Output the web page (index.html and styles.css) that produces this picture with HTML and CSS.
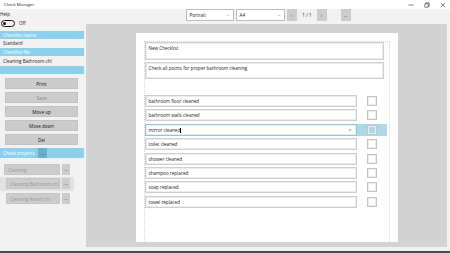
FILE: index.html
```html
<!DOCTYPE html>
<html lang="en">
<head>
    <meta charset="UTF-8">
    <meta name="viewport" content="width=device-width, initial-scale=1.0">
    <title>Check Manager</title>
    <link rel="stylesheet" href="styles.css">
</head>
<body>
    <div class="titlebar">
        <span class="app-title">Check Manager</span>
        <div class="win-controls">
            <svg width="6" height="6" viewBox="0 0 6 6"><path d="M0.5 3h5" stroke="#333" stroke-width="0.6"/></svg>
            <svg width="6" height="6" viewBox="0 0 6 6"><path d="M0.8 1.8h3.4v3.4h-3.4z M1.8 1.8v-1h3.4v3.4h-1" fill="none" stroke="#333" stroke-width="0.6"/></svg>
            <svg width="6" height="6" viewBox="0 0 6 6"><path d="M0.8 0.8l4.4 4.4 M5.2 0.8l-4.4 4.4" stroke="#333" stroke-width="0.6"/></svg>
        </div>
    </div>

    <div class="app">
        <!-- left side panel -->
        <aside class="side">
            <div class="help">Help</div>
            <div class="toggle-row">
                <span class="toggle"><span class="knob"></span></span>
                <span>Off</span>
            </div>
            <div class="bar">Checklist layout</div>
            <div class="side-text">Standard</div>
            <div class="bar">Checklist file</div>
            <div class="side-text tall">Cleaning Bathroom.chl</div>
            <div class="bar"></div>

            <div class="buttons">
                <button class="btn">Print</button>
                <button class="btn disabled">Save</button>
                <button class="btn">Move up</button>
                <button class="btn">Move down</button>
                <button class="btn">Del</button>
            </div>

            <div class="bar projects">
                <span>Check projects</span>
                <span class="bar-btn">...</span>
            </div>

            <div class="project-list">
                <div class="project">
                    <span class="project-name">Cleaning</span>
                    <span class="dots-btn">...</span>
                </div>
                <div class="project selected">
                    <span class="project-name">Cleaning Bathroom.chl</span>
                    <span class="dots-btn">...</span>
                </div>
                <div class="project">
                    <span class="project-name">Cleaning Room.chl</span>
                    <span class="dots-btn">...</span>
                </div>
            </div>
        </aside>

        <!-- print preview area -->
        <section class="work">
            <div class="toolbar">
                <div class="select wide">Portrait <span class="chev">&#8964;</span></div>
                <div class="select">A4 <span class="chev">&#8964;</span></div>
                <span class="tool-btn nav">&#8249;</span>
                <span class="pages">1 / 1</span>
                <span class="tool-btn">&#8250;</span>
                <span class="tool-btn more">...</span>
            </div>

            <div class="canvas">
                <div class="page">
                    <div class="sheet">
                        <div class="field title">New Checklist</div>
                        <div class="field desc">Check all points for proper bathroom cleaning.</div>

                        <div class="checklist">
                            <div class="row">
                                <div class="field item">bathroom floor cleaned</div>
                                <div class="check-cell"><span class="checkbox"></span></div>
                            </div>
                            <div class="row">
                                <div class="field item">bathroom walls cleaned</div>
                                <div class="check-cell"><span class="checkbox"></span></div>
                            </div>
                            <div class="row">
                                <div class="field item focused">mirror cleaned<span class="caret"></span><span class="clear">&#215;</span></div>
                                <div class="check-cell active"><span class="checkbox"></span></div>
                            </div>
                            <div class="row">
                                <div class="field item">toilet cleaned</div>
                                <div class="check-cell"><span class="checkbox"></span></div>
                            </div>
                            <div class="row">
                                <div class="field item">shower cleaned</div>
                                <div class="check-cell"><span class="checkbox"></span></div>
                            </div>
                            <div class="row">
                                <div class="field item">shampoo replaced</div>
                                <div class="check-cell"><span class="checkbox"></span></div>
                            </div>
                            <div class="row">
                                <div class="field item">soap replaced</div>
                                <div class="check-cell"><span class="checkbox"></span></div>
                            </div>
                            <div class="row">
                                <div class="field item">towel replaced</div>
                                <div class="check-cell"><span class="checkbox"></span></div>
                            </div>
                        </div>
                    </div>
                </div>
            </div>
        </section>
    </div>
</body>
</html>
```

FILE: styles.css
```css
*{
    padding: 0;
    margin: 0;
    box-sizing: border-box;
}

:root {
    --panel-color: #f2f2f2;
    --bar-color: #8dd0ee;
    --bar-button: #6aaecd;
    --button-color: #cccccc;
    --canvas-color: #d3d3d3;
    --field-border: #cfcfcf;
    --highlight: #acd9e8;
    --text-color: #222222;
}

body {
    width: 450px;
    height: 253px;
    overflow: hidden;
    font-family: "Open Sans", "Noto Sans", sans-serif;
    font-size: 4.6px;
    color: var(--text-color);
    background-color: var(--panel-color);
    border-bottom: 2px solid #4a4a4a;
}

/* window title */
.titlebar {
    height: 9px;
    display: flex;
    align-items: center;
    justify-content: space-between;
    padding-left: 4px;
    background-color: #ffffff;
    font-size: 4.2px;
}

.win-controls {
    display: flex;
    gap: 10px;
    padding-right: 4px;
}

.win-controls svg {
    display: block;
}

.app {
    display: flex;
    height: 242px;
}

/* left panel */
.side {
    width: 86px;
    flex-shrink: 0;
}

.help {
    height: 8px;
    line-height: 10px;
}

.toggle-row {
    display: flex;
    align-items: center;
    gap: 4px;
    height: 8px;
    margin-top: 2px;
    padding-left: 1px;
}

.toggle {
    width: 14px;
    height: 7px;
    border: 1px solid #111;
    border-radius: 4px;
    display: flex;
    align-items: center;
    padding-left: 1px;
}

.knob {
    width: 3px;
    height: 3px;
    border-radius: 50%;
    background-color: #111;
}

.bar {
    width: 84px;
    height: 8px;
    line-height: 8px;
    padding-left: 3px;
    color: #ffffff;
    background-color: var(--bar-color);
}

.toggle-row + .bar {
    margin-top: 4px;
}

.side-text {
    height: 9px;
    line-height: 9px;
    padding-left: 3px;
}

.side-text.tall {
    height: 10px;
    line-height: 10px;
}

.buttons {
    display: flex;
    flex-direction: column;
    gap: 3px;
    margin: 4px 0 0 5px;
    width: 73px;
}

.btn {
    height: 11px;
    font-family: inherit;
    font-size: 4.6px;
    color: #111;
    background-color: var(--button-color);
    border: 1px solid #c2c2c2;
}

.btn.disabled {
    color: #8a8a8a;
}

.bar.projects {
    display: flex;
    height: 10px;
    line-height: 10px;
    margin-top: 3px;
    padding-left: 3px;
}

.bar-btn {
    width: 9px;
    margin-left: 4px;
    text-align: center;
    color: #2d4d5c;
    background-color: var(--bar-button);
}

.project-list {
    margin-top: 6px;
}

.project {
    display: flex;
    gap: 2px;
    height: 11px;
    padding-left: 4px;
}

.project + .project {
    margin-top: 3px;
}

.project.selected {
    width: 74px;
    height: 14px;
    margin-top: 2px;
    padding: 1px 0 2px 6px;
    background-color: #e2e2e2;
}

.project.selected + .project {
    margin-top: 2px;
    padding-left: 6px;
}

.project-name {
    flex: 1;
    max-width: 56px;
    line-height: 10px;
    padding-left: 3px;
    color: #9a9a9a;
    background-color: var(--button-color);
    border: 1px solid #c6c6c6;
    white-space: nowrap;
    overflow: hidden;
}

.project.selected .project-name,
.project.selected + .project .project-name {
    max-width: 54px;
}

.dots-btn {
    width: 8px;
    line-height: 10px;
    text-align: center;
    color: #444;
    background-color: var(--button-color);
}

/* right work area */
.work {
    flex: 1;
    display: flex;
    flex-direction: column;
    padding: 0 3px 4px 0;
}

.toolbar {
    height: 15px;
    display: flex;
    align-items: flex-start;
    justify-content: center;
    gap: 2px;
    padding-left: 3px;
}

.select {
    width: 49px;
    height: 12px;
    line-height: 11px;
    padding-left: 3px;
    position: relative;
    background-color: #ffffff;
    border: 1px solid #bdbdbd;
}

.select.wide {
    width: 48px;
}

.chev {
    position: absolute;
    right: 3px;
    top: -1px;
    color: #999;
    font-size: 5px;
}

.tool-btn {
    width: 10px;
    height: 12px;
    line-height: 12px;
    text-align: center;
    color: #555;
    background-color: var(--button-color);
}

.tool-btn.nav {
    margin-right: 1px;
}

.tool-btn.more {
    margin-left: 12px;
}

.pages {
    width: 15px;
    line-height: 12px;
    text-align: center;
}

.canvas {
    flex: 1;
    display: flex;
    justify-content: center;
    padding-top: 9px;
    background-color: var(--canvas-color);
}

.page {
    width: 262px;
    height: 209px;
    padding: 8px 8px 0 8px;
    background-color: #ffffff;
}

.sheet {
    height: 100%;
    border: 1px dotted #d4d4d4;
    border-bottom: none;
}

.field {
    background-color: #ffffff;
    border: 1px solid var(--field-border);
    box-shadow: 0 0 0 1px #ececec inset;
    padding-left: 3px;
    white-space: nowrap;
}

.field.title {
    width: 239px;
    height: 18px;
    padding-top: 2px;
}

.field.desc {
    width: 239px;
    height: 17px;
    margin-top: 2px;
    padding-top: 2px;
}

.checklist {
    display: flex;
    flex-direction: column;
    gap: 2.4px;
    margin-top: 16px;
}

.row {
    display: flex;
    height: 12px;
}

.field.item {
    width: 212px;
    line-height: 10px;
    position: relative;
}

.field.item.focused {
    border-color: #8fc6dd;
}

.caret {
    display: inline-block;
    width: 0.5px;
    height: 5px;
    vertical-align: middle;
    background-color: #000;
}

.clear {
    position: absolute;
    right: 4px;
    top: 0;
    color: #666;
}

.check-cell {
    width: 30px;
    padding: 1px 0 0 10px;
}

.check-cell.active {
    background-color: var(--highlight);
}

.checkbox {
    display: block;
    width: 10px;
    height: 10px;
    border: 1px solid #c4c4c4;
    box-shadow: 0 0 0 1px #ececec inset;
}
```
